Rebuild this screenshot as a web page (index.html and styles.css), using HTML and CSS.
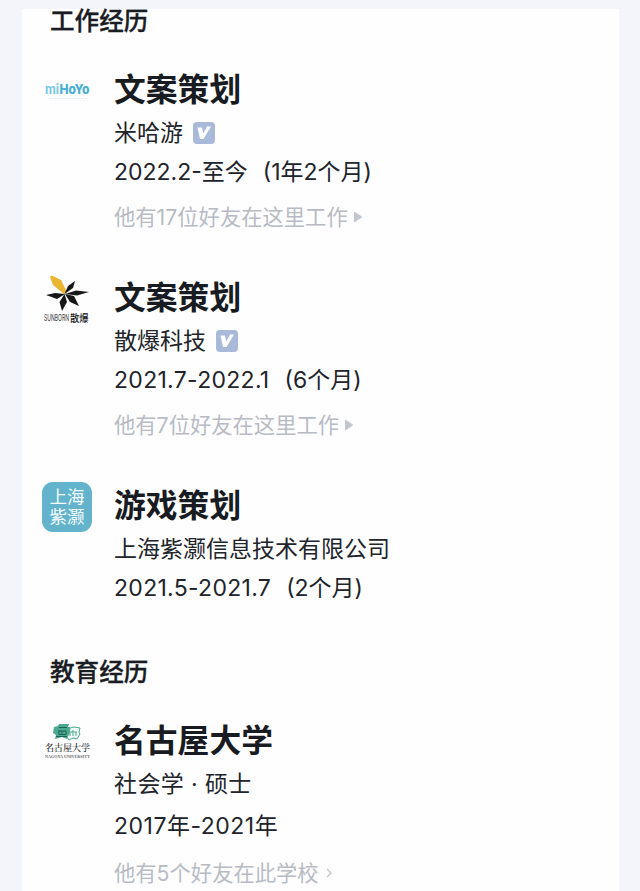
FILE: index.html
```html
<!DOCTYPE html>
<html lang="zh-CN">
<head>
<meta charset="utf-8">
<title>工作经历</title>
<link rel="stylesheet" href="styles.css">
</head>
<body>
<main class="card">
  <h2 class="section">工作经历</h2>
  <article class="entry">
    <div class="logo">
      <svg class="mihoyo" width="50" height="24" viewBox="0 0 50 24">
        <g font-family="Inter, sans-serif" font-size="13"><text x="3" y="16" font-weight="700" fill="#74c9ea" textLength="14" lengthAdjust="spacingAndGlyphs">mi</text><text x="17.5" y="16" font-weight="800" fill="#48afd3" textLength="30" lengthAdjust="spacingAndGlyphs">HoYo</text></g>
        <path d="M7 20.5H45" stroke="#e0eff5" stroke-width="1" stroke-dasharray="3 1"/>
      </svg>
    </div>
    <div class="info">
      <h3 class="title">文案策划</h3>
      <p class="line">米哈游<svg class="badge" viewBox="0 0 22 22"><rect width="22" height="22" rx="4" fill="#a9b9da"/><path d="M4.5 5.5H9L10.2 11.5L14 4.5H18L10.5 17H7Z" fill="#fff"/></svg></p>
      <p class="line date"><span>2022.2-至今</span><span>(1年2个月)</span></p>
      <p class="friends"><span>他有17位好友在这里工作</span><svg class="arrow" viewBox="0 0 10 12"><path d="M1 1.5Q1 .5 2 1L8.5 5.2Q9.5 6 8.5 6.8L2 11Q1 11.5 1 10.5Z" fill="#c3c6ce"/></svg></p>
    </div>
  </article>
  <article class="entry">
    <div class="logo">
      <svg class="sunborn" width="50" height="54" viewBox="0 0 50 54">
        <path d="M8 3Q9 1 12 2.5L19 6L25 18L22 20L11 11Z" fill="#eab531"/>
        <g fill="#171717"><path d="M22.500 20L26 12L33 7L31 14Z"/><path d="M23 20L34 16.500L47 18L35 21.500Z"/><path d="M23 20L32 22L37 32L28 28Z"/><path d="M22.500 20L25 28L20 37L17.500 28Z"/><path d="M23 20L15 25L4 21L13 19Z"/></g>
        <text x="2" y="47" font-family="Inter, sans-serif" font-size="9.5" fill="#333" textLength="25" lengthAdjust="spacingAndGlyphs">SUNBORN</text>
        <text x="28" y="47.500" font-family="'Noto Sans CJK SC', sans-serif" font-size="10" font-weight="500" fill="#222" textLength="18.500" lengthAdjust="spacingAndGlyphs">散爆</text>
      </svg>
    </div>
    <div class="info">
      <h3 class="title">文案策划</h3>
      <p class="line">散爆科技<svg class="badge" viewBox="0 0 22 22"><rect width="22" height="22" rx="4" fill="#a9b9da"/><path d="M4.5 5.5H9L10.2 11.5L14 4.5H18L10.5 17H7Z" fill="#fff"/></svg></p>
      <p class="line date"><span class="range">2021.7-2022.1</span><span>(6个月)</span></p>
      <p class="friends"><span>他有7位好友在这里工作</span><svg class="arrow" viewBox="0 0 10 12"><path d="M1 1.5Q1 .5 2 1L8.5 5.2Q9.5 6 8.5 6.8L2 11Q1 11.5 1 10.5Z" fill="#c3c6ce"/></svg></p>
    </div>
  </article>
  <article class="entry last">
    <div class="logo"><div class="tile">上海<br>紫灏</div></div>
    <div class="info">
      <h3 class="title">游戏策划</h3>
      <p class="line">上海紫灏信息技术有限公司</p>
      <p class="line date"><span class="range">2021.5-2021.7</span><span>(2个月)</span></p>
    </div>
  </article>
  <h2 class="section">教育经历</h2>
  <article class="entry school">
    <div class="logo">
      <svg class="nagoya" width="50" height="40" viewBox="0 0 50 40">
        <path d="M12 5L16 4L17 2H27L26 5H28V9L25 17L20 15L13 17L14 13L11 11Z" fill="#4aa98e"/>
        <path d="M17 5.500H25M16 9H24V12.500H17V9M20 9V12M14 14.500H25" fill="none" stroke="#1d6253" stroke-width="1"/>
        <path d="M28 6L32 5L38 6L37 10L38 12L35 17L31 16L27 18L25 15L27 12Z" fill="#f2faf7" stroke="#4bab91"/>
        <path d="M28 10H35M31 8V14M28 10V14M34 10V14" fill="none" stroke="#4bab91"/>
        <text x="3" y="29" font-family="'Noto Serif CJK SC', 'Noto Sans CJK SC', serif" font-size="9.5" font-weight="500" fill="#222" textLength="45" lengthAdjust="spacingAndGlyphs">名古屋大学</text>
        <text x="3" y="35.500" font-family="'Liberation Serif', serif" font-size="4.5" font-weight="700" fill="#666" textLength="45" lengthAdjust="spacingAndGlyphs">NAGOYA UNIVERSITY</text>
      </svg>
    </div>
    <div class="info">
      <h3 class="title">名古屋大学</h3>
      <p class="line degree">社会学 · 硕士</p>
      <p class="line date years">2017年-2021年</p>
      <p class="friends"><span>他有5个好友在此学校</span><svg class="chevron" viewBox="0 0 8 12"><path d="M2 2L6 6L2 10" fill="none" stroke="#c3c6ce" stroke-width="1.4"/></svg></p>
    </div>
  </article>
</main>
</body>
</html>
```
FILE: styles.css
```css
* { box-sizing: border-box; }
body {
  margin: 0;
  padding: 9px 21px 0 22px;
  height: 891px;
  background: #f4f5fb;
  color: #22242b;
  font-family: Inter, "Noto Sans CJK SC", sans-serif;
}
h2, h3, p { margin: 0; }
.card {
  height: 882px;
  padding: 0 20px;
  background: #fefefe;
}
.section {
  height: 24px;
  padding-left: 8px;
  font-size: 24.6px;
  line-height: 24px;
  font-weight: 500;
  color: #1b1d25;
  -webkit-text-stroke: 0.3px #1b1d25;
}
.entry {
  display: flex;
  gap: 22px;
  height: 208px;
  padding-top: 36px;
}
.entry.last { height: 211px; }
.entry.school { height: 190px; }
.logo { width: 50px; flex: none; }
.logo svg { display: block; }
.mihoyo { margin-top: 9px; }
.sunborn { margin-top: -3px; }
.nagoya { margin-top: 2px; }
.tile {
  width: 50px;
  height: 50px;
  margin-top: -3px;
  padding-top: 5px;
  border-radius: 11px;
  background: #62b3cb;
  color: #f4fcff;
  font-size: 17.5px;
  line-height: 20px;
  text-align: center;
}
.info { white-space: nowrap; }
.title {
  height: 42px;
  font-size: 31.8px;
  line-height: 42px;
  font-weight: 700;
  color: #191b22;
}
.line {
  display: flex;
  align-items: center;
  height: 32px;
  margin-top: 6px;
  font-size: 23px;
  line-height: 32px;
}
.badge { width: 22px; height: 22px; margin-left: 10px; }
.date { gap: 15px; margin-top: 7px; }
.range { letter-spacing: 0.3px; }
.degree { letter-spacing: 0.4px; }
.years { letter-spacing: 0.5px; }
.friends {
  display: flex;
  align-items: center;
  height: 32px;
  margin-top: 13px;
  font-size: 21.3px;
  line-height: 32px;
  color: #b8bbc4;
}
.arrow { width: 10px; height: 12px; margin-left: 5px; }
.chevron { width: 8px; height: 12px; margin-left: 6px; }
.school .date { margin-top: 10px; }
.school .friends { margin-top: 15px; }
```
